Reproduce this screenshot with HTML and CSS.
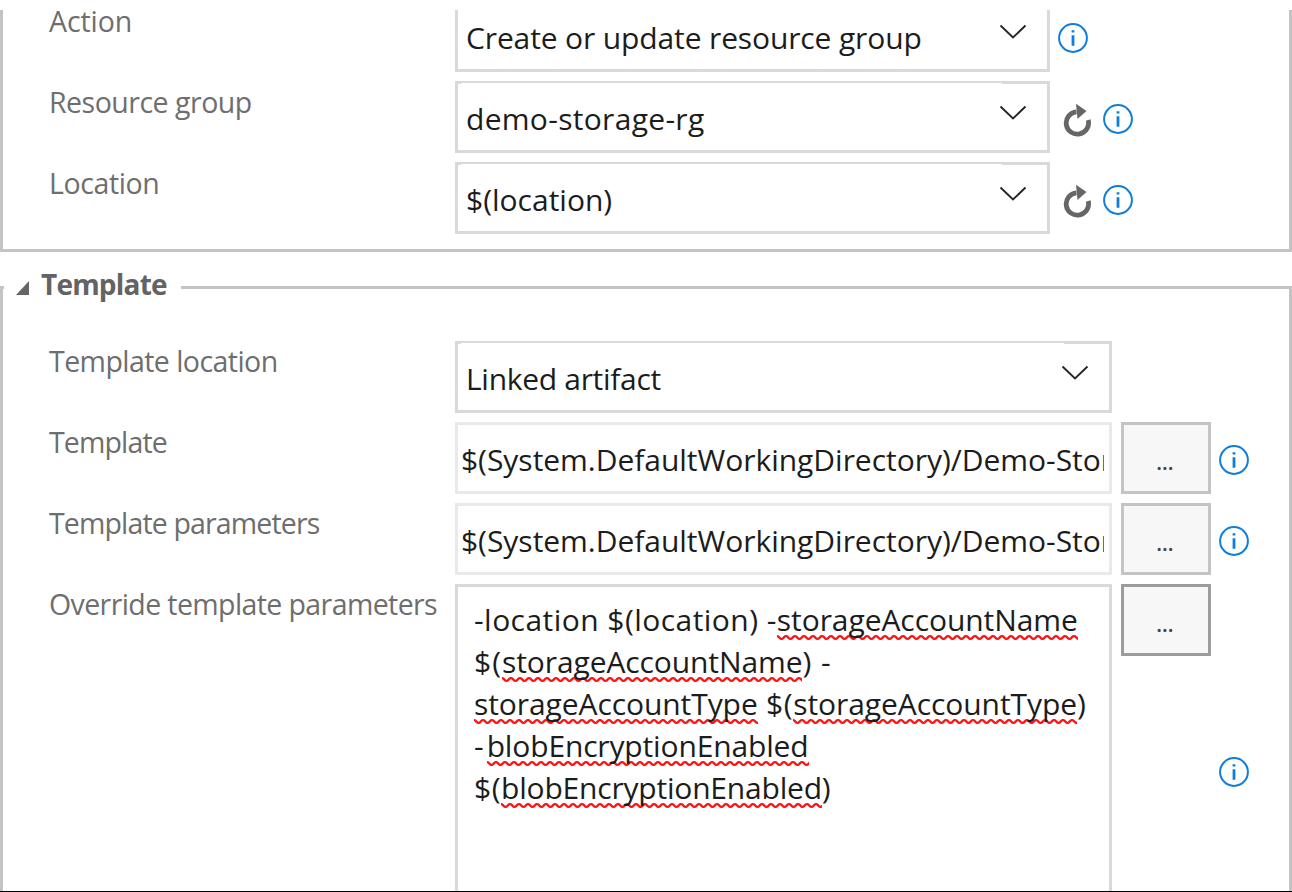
FILE: index.html
```html
<!DOCTYPE html>
<html lang="en">
<head>
<meta charset="utf-8">
<title>Release task</title>
<link rel="stylesheet" href="styles.css">
</head>
<body>
<svg width="0" height="0" class="defs">
  <symbol id="info" viewBox="0 0 30 30"><circle cx="15" cy="15" r="13.9" fill="none" stroke="#0f7edb" stroke-width="2"/><path d="M15 12.2v10.6M15 7.2v2.4" fill="none" stroke="#0f7edb" stroke-width="2.8"/></symbol>
  <symbol id="refresh" viewBox="0 0 30 34"><path d="M26.2 17A11.2 11.2 0 1 1 14.5 8.8" fill="none" stroke="#666" stroke-width="4.8"/><path d="M14 0.8L24.5 8L15.5 16z" fill="#666"/></symbol>
  <symbol id="chevron" viewBox="0 0 28 16"><path d="M1.5 1.5L14 13.5L26.5 1.5" fill="none" stroke="#262626" stroke-width="1.9"/></symbol>
</svg>
<main class="page">
  <section class="panel panel-azure">
    <div class="row">
      <label class="label l-action">Action</label>
      <div class="select"><span class="t-create">Create or update resource group</span><svg class="chevron"><use href="#chevron"/></svg></div>
      <svg class="info"><use href="#info"/></svg>
    </div>
    <div class="row">
      <label class="label l-group">Resource group</label>
      <div class="select"><span class="t-demo">demo-storage-rg</span><svg class="chevron"><use href="#chevron"/></svg></div>
      <svg class="refresh"><use href="#refresh"/></svg>
      <svg class="info"><use href="#info"/></svg>
    </div>
    <div class="row">
      <label class="label l-location">Location</label>
      <div class="select"><span class="t-loc">$(location)</span><svg class="chevron"><use href="#chevron"/></svg></div>
      <svg class="refresh"><use href="#refresh"/></svg>
      <svg class="info"><use href="#info"/></svg>
    </div>
  </section>
  <section class="panel-template">
    <div class="legend">
      <i class="line line-start"></i>
      <svg class="toggle" viewBox="0 0 13 14"><path d="M13 0V14H0z" fill="#666"/></svg>
      <h2 class="heading">Template</h2>
      <i class="line line-rest"></i>
    </div>
    <div class="panel-body">
      <div class="row">
        <label class="label l-tloc">Template location</label>
        <div class="select wide"><span class="t-linked">Linked artifact</span><svg class="chevron"><use href="#chevron"/></svg></div>
      </div>
      <div class="row">
        <label class="label l-template">Template</label>
        <div class="input"><span class="path">$(System.DefaultWorkingDirectory)/Demo-Stor</span></div>
        <button class="browse">...</button>
        <svg class="info"><use href="#info"/></svg>
      </div>
      <div class="row">
        <label class="label l-tparams">Template parameters</label>
        <div class="input"><span class="path">$(System.DefaultWorkingDirectory)/Demo-Stor</span></div>
        <button class="browse">...</button>
        <svg class="info"><use href="#info"/></svg>
      </div>
      <div class="row row-area">
        <label class="label l-override">Override template parameters</label>
        <div class="area">
          <div class="a1">-location $(location) -<span class="sp">storageAccountName</span></div>
          <div class="a2">$(<span class="sp">storageAccountName</span>) -</div>
          <div class="a3"><span class="sp">storageAccountType</span> $(<span class="sp">storageAccountType</span>)</div>
          <div class="a4">-<span class="sp">blobEncryptionEnabled</span></div>
          <div class="a5">$(<span class="sp">blobEncryptionEnabled</span>)</div>
        </div>
        <button class="browse dark">...</button>
        <svg class="info info-area"><use href="#info"/></svg>
      </div>
    </div>
  </section>
</main>
</body>
</html>
```
FILE: styles.css
```css
* { box-sizing: border-box; }
body { margin: 0; background: #fff; font-family: "Open Sans", "Noto Sans", sans-serif; font-size: 30px; color: #1c1c1c; }
.defs { display: block; }
.page { display: flex; flex-direction: column; width: 1292px; height: 892px; padding-top: 10px; border-bottom: 1px solid #000; overflow: hidden; }
.panel { flex: none; height: 242px; border: 3px solid #c4c4c4; border-top: 0; overflow: hidden; }
.row { display: flex; height: 72px; margin-bottom: 9px; }
.panel-azure .row:first-child { margin-top: -10px; }
.panel-azure .label { margin-top: 1px; }
.label { flex: none; width: 452px; padding-left: 46px; line-height: 40px; color: #6e6e6e; white-space: nowrap; font-size: 28.5px; }
.l-action { letter-spacing: -0.1px; }
.l-group { letter-spacing: -0.5px; }
.l-location { letter-spacing: -0.4px; }
.l-tloc { letter-spacing: -0.55px; }
.l-template, .l-tparams { letter-spacing: -0.85px; }
.l-override { letter-spacing: -0.6px; }
.select, .input { position: relative; flex: none; display: flex; align-items: flex-start; height: 72px; border: 3px solid #d9d9d9; white-space: nowrap; line-height: 40px; }
.select { width: 595px; border-top-width: 2px; padding: 16px 20px 0 8px; justify-content: space-between; }
.select::before, .select::after { content: ""; position: absolute; top: 0; height: 1px; background: #d9d9d9; }
.select::before { left: 0; width: 3px; }
.select::after { right: 0; width: 45px; }
.t-create { letter-spacing: -0.13px; }
.t-demo { letter-spacing: 0.3px; }
.t-linked { letter-spacing: -0.3px; }
.select.wide, .input { width: 657px; }
.input { border-color: #e9e9e9; padding: 15px 4px 0 3px; }
.path { overflow: hidden; width: 643px; letter-spacing: -0.03px; }
.chevron { flex: none; width: 28px; height: 16px; margin-top: 6px; }
.info { flex: none; width: 30px; height: 30px; margin: 23px 0 0 8px; }
.refresh { flex: none; width: 30px; height: 34px; margin: 22px 2px 0 12px; }
.refresh + .info { margin-left: 9px; }
.panel-template { flex: 1; display: flex; flex-direction: column; }
.legend { display: flex; flex: none; height: 40px; margin-top: 14px; align-items: flex-start; }
.line { height: 3px; background: #c4c4c4; margin-top: 20px; }
.line-start { width: 4px; }
.toggle { width: 13px; height: 14px; margin: 15px 12px 0 12px; }
.heading { margin: 0; width: 140px; font-size: 28px; line-height: 36px; font-weight: 700; letter-spacing: -0.8px; color: #636363; white-space: nowrap; }
.line-rest { flex: 1; }
.panel-body { flex: 1; margin-top: -20px; padding-top: 55px; border: 3px solid #c4c4c4; border-width: 0 3px; }
.browse { flex: none; width: 90px; height: 72px; margin-left: 9px; padding: 8px 2px 0 0; border: 3px solid #c4c4c4; background: #f7f7f7; color: #444; font: 600 21px/30px "Open Sans", sans-serif; }
.browse.dark { border-color: #9c9c9c; }
.row-area { height: 330px; margin-bottom: 0; }
.area { flex: none; width: 657px; height: 330px; border: 3px solid #d9d9d9; padding: 12px 0 0 16px; line-height: 42px; white-space: nowrap; }
.a1 { letter-spacing: 0.45px; }
.a1 .sp { letter-spacing: -0.07px; }
.a2 { letter-spacing: 1px; }
.a2 .sp { letter-spacing: -0.1px; }
.a3 { letter-spacing: 0.6px; }
.a3 .sp { letter-spacing: -0.08px; }
.a4 { letter-spacing: 3px; }
.a4 .sp { letter-spacing: -0.15px; }
.a5 { letter-spacing: 0.5px; }
.a5 .sp { letter-spacing: -0.2px; }
.info-area { margin-top: 173px; }
.sp { background: url("data:image/svg+xml,%3Csvg xmlns='http://www.w3.org/2000/svg' width='9' height='5'%3E%3Cpath d='M-2.25 2.5Q0 -.2 2.25 2.5T6.75 2.5T11.25 2.5' fill='none' stroke='%23ff1414' stroke-width='2.4'/%3E%3C/svg%3E") left bottom repeat-x; }
```
